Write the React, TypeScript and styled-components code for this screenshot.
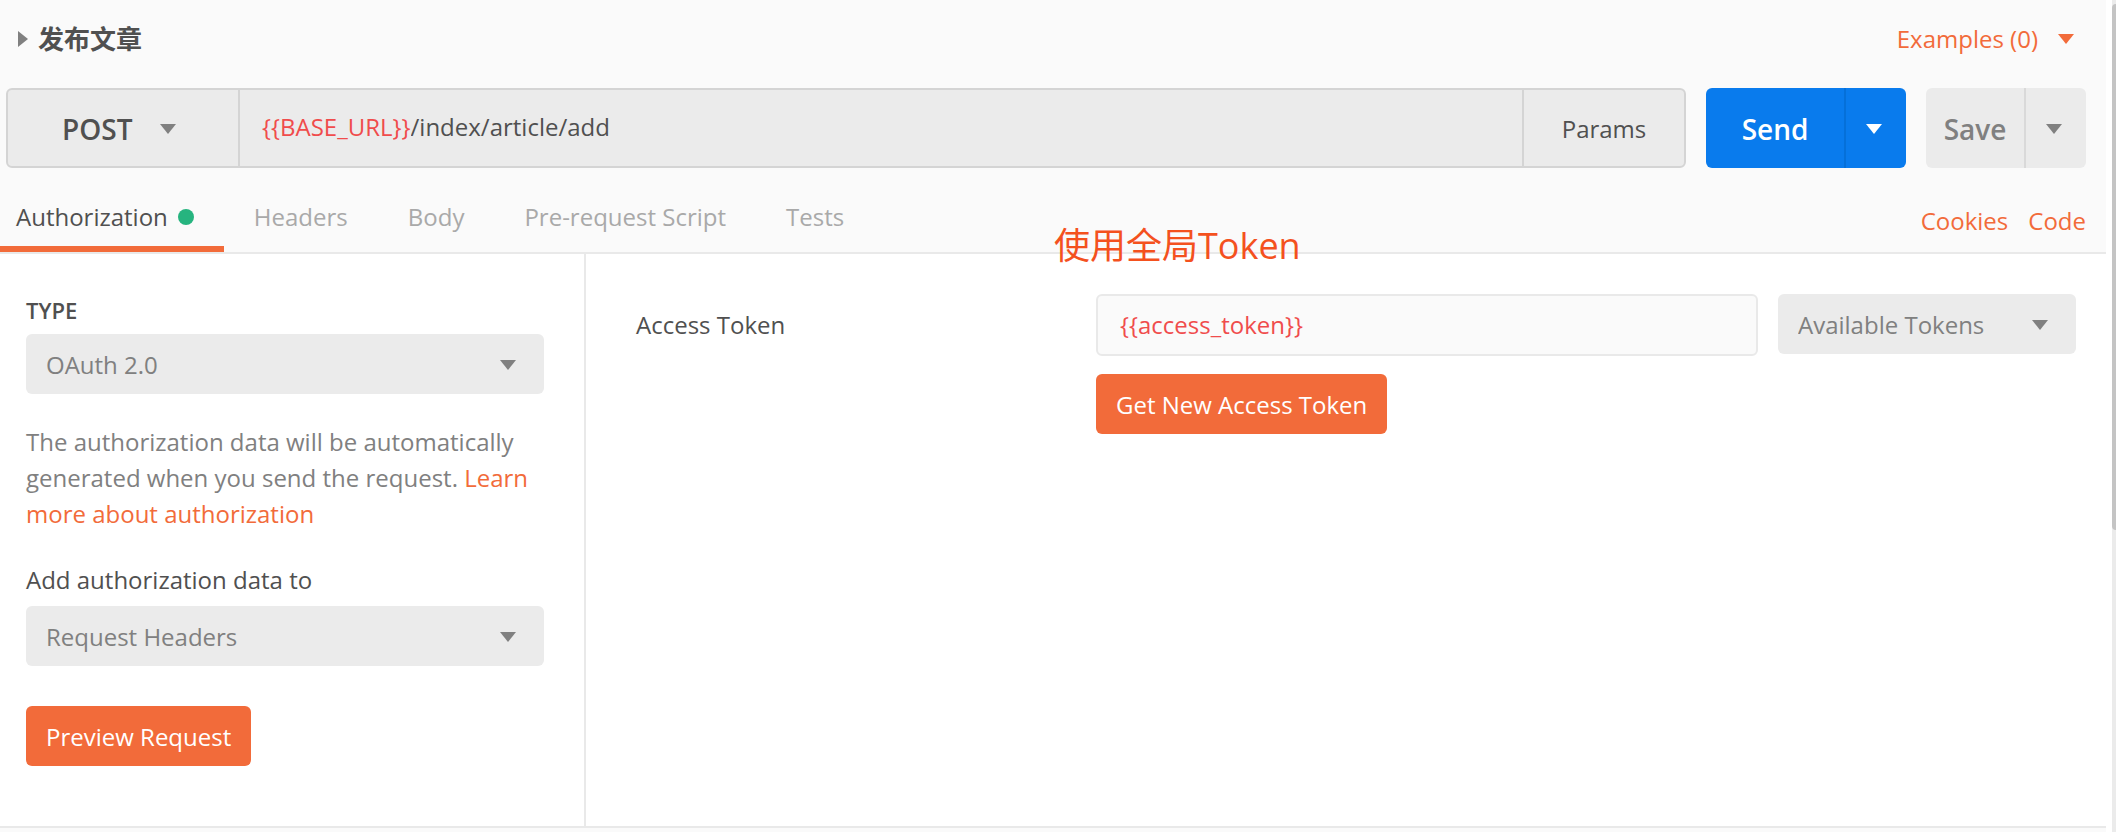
import React, { useState } from "react";
import styled, { createGlobalStyle, css } from "styled-components";

const color = {
  text: "#505050",
  muted: "#808080",
  faint: "#a9a9a9",
  orange: "#f26b3a",
  variable: "#f04c4c",
  blue: "#097bed",
  fill: "#ebebeb",
  line: "#e9e9e9",
  border: "#d4d4d4",
  page: "#fafafa",
  green: "#26b47f",
};

const GlobalStyle = createGlobalStyle`
  *, *::before, *::after { box-sizing: border-box; }
  body {
    margin: 0;
    background: #fff;
    color: ${color.text};
    font-family: "Open Sans", "Noto Sans CJK SC", sans-serif;
    font-size: 24px;
    line-height: 36px;
  }
  button, input, select { font: inherit; color: inherit; margin: 0; }
  button { cursor: pointer; }
  a { color: ${color.orange}; text-decoration: none; }
`;

const Shell = styled.div`
  display: flex;
  min-height: 100vh;
`;

const Main = styled.main`
  flex: 1;
  min-width: 0;
  display: flex;
  flex-direction: column;
  background: ${color.page};
`;

const ScrollTrack = styled.div`
  flex: none;
  width: 4px;
  margin-left: 6px;
  padding-top: 4px;
  background: ${color.fill};
`;

const ScrollThumb = styled.div`
  height: 526px;
  border-radius: 4px 0 0 4px;
  background: #c4c4c4;
`;

const TitleRow = styled.header`
  display: flex;
  align-items: center;
  justify-content: space-between;
  height: 78px;
  padding: 0 32px 0 18px;
`;

const PlainButton = styled.button<{ $accent?: boolean }>`
  display: flex;
  align-items: center;
  gap: ${(p) => (p.$accent ? 20 : 10)}px;
  padding: 0;
  border: 0;
  background: none;
  color: ${(p) => (p.$accent ? color.orange : color.muted)};
`;

const Title = styled.h1`
  margin: 0;
  color: ${color.text};
  font-size: 26px;
  font-weight: 700;
`;

const RequestRow = styled.form`
  display: flex;
  gap: 20px;
  margin-top: 10px;
  padding: 0 20px 0 6px;
`;

const UrlBar = styled.div`
  flex: 1;
  min-width: 0;
  display: flex;
  height: 80px;
  border: 2px solid ${color.border};
  border-radius: 6px;
  background: ${color.fill};
`;

const UrlField = styled.label`
  flex: 1;
  min-width: 0;
  display: flex;
  align-items: center;
  padding: 0 22px 2px;
  border: solid ${color.border};
  border-width: 0 2px;
`;

const Variable = styled.span`
  color: ${color.variable};
`;

const UrlInput = styled.input`
  flex: 1;
  min-width: 0;
  padding: 0;
  border: 0;
  outline: 0;
  background: none;
`;

const ParamsButton = styled.button`
  width: 160px;
  padding: 2px 0 0;
  border: 0;
  background: none;
`;

const SplitButton = styled.div<{ $primary?: boolean }>`
  display: flex;
  height: 80px;
  border-radius: 6px;
  overflow: hidden;
  ${(p) =>
    p.$primary
      ? css`
          background: ${color.blue};
          color: #fff;
          --split: #0570d9;
        `
      : css`
          background: ${color.fill};
          color: ${color.muted};
          --split: #d9d9d9;
        `}
`;

const SplitMain = styled.button<{ $wide?: boolean }>`
  width: ${(p) => (p.$wide ? 138 : 98)}px;
  padding: 2px 0 0;
  border: 0;
  background: none;
  font-size: 28px;
  font-weight: 600;
`;

const SplitMore = styled.button`
  display: flex;
  align-items: center;
  justify-content: center;
  width: 62px;
  padding: 2px 4px 0 0;
  border: 0;
  border-left: 2px solid var(--split);
  background: none;
`;

const TabRow = styled.div`
  display: flex;
  justify-content: space-between;
  height: 86px;
  padding-right: 20px;
  border-bottom: 2px solid ${color.line};
`;

const Tabs = styled.div`
  display: flex;
`;

const Tab = styled.button<{ $active?: boolean }>`
  display: flex;
  align-items: center;
  gap: 10px;
  padding: 20px 30px 0;
  border: 0;
  border-bottom: 6px solid ${(p) => (p.$active ? color.orange : "transparent")};
  background: none;
  color: ${(p) => (p.$active ? color.text : color.faint)};
  &:first-child { padding-left: 16px; }
`;

const Dot = styled.span`
  width: 16px;
  height: 16px;
  border-radius: 50%;
  background: ${color.green};
`;

const TabLinks = styled.nav`
  display: flex;
  align-items: center;
  gap: 20px;
  padding-top: 22px;
`;

const Panels = styled.div`
  display: flex;
  background: #fff;
  border-bottom: 2px solid ${color.line};
`;

const TypePanel = styled.section`
  flex: none;
  width: 586px;
  padding: 40px 40px 60px 26px;
  border-right: 2px solid ${color.line};
`;

const TypeLabel = styled.label`
  display: block;
  margin-bottom: 8px;
  font-size: 22px;
  font-weight: 600;
  line-height: 32px;
`;

const TargetLabel = styled.label`
  display: block;
  margin-bottom: 8px;
`;

const Help = styled.p`
  margin: 30px 0;
  color: ${color.muted};
`;

const SelectBox = styled.div`
  position: relative;
  color: ${color.muted};
`;

const SelectArrow = styled.span<{ $right: number }>`
  position: absolute;
  inset: 0 ${(p) => p.$right}px 0 auto;
  display: flex;
  align-items: center;
  padding-top: 2px;
  pointer-events: none;
`;

const Select = styled.select`
  display: block;
  width: 100%;
  height: 60px;
  padding: 2px 60px 0 20px;
  border: 0;
  border-radius: 6px;
  appearance: none;
  background: ${color.fill};
`;

const MethodBox = styled(SelectBox)`
  width: 230px;
`;

const MethodSelect = styled(Select)`
  height: 76px;
  padding: 2px 70px 0 54px;
  background: none;
  color: ${color.text};
  font-size: 28px;
  font-weight: 600;
`;

const ActionButton = styled.button`
  height: 60px;
  padding: 2px 20px 0;
  border: 0;
  border-radius: 6px;
  background: ${color.orange};
  color: #fff;
  font-weight: 500;
`;

const PreviewButton = styled(ActionButton)`
  display: block;
  margin-top: 40px;
`;

const TokenPanel = styled.section`
  position: relative;
  flex: 1;
  min-width: 0;
  display: grid;
  grid-template-columns: 440px minmax(0, 1fr) 298px;
  align-content: start;
  align-items: start;
  gap: 18px 20px;
  padding: 40px 30px 0 50px;
`;

const TokenLabel = styled.label`
  line-height: 62px;
`;

const TokenInput = styled.input`
  width: 100%;
  height: 62px;
  padding: 0 22px 2px;
  border: 2px solid ${color.line};
  border-radius: 6px;
  background: ${color.page};
  color: ${color.variable};
`;

const TokenAction = styled.div`
  grid-column: 2;
`;

const Annotation = styled.div`
  position: absolute;
  top: -34px;
  left: 468px;
  color: #f4511e;
  font-size: 36px;
  line-height: 52px;
  white-space: nowrap;
`;

function ArrowDown() {
  return (
    <svg width="16" height="10" viewBox="0 0 16 10" aria-hidden="true">
      <path d="M0 0h16L8 10z" fill="currentColor" />
    </svg>
  );
}

function ArrowRight() {
  return (
    <svg width="10" height="16" viewBox="0 0 10 16" aria-hidden="true">
      <path d="M0 0v16l10-8z" fill="currentColor" />
    </svg>
  );
}

const TABS = ["Authorization", "Headers", "Body", "Pre-request Script", "Tests"];

export default function App() {
  const [active, setActive] = useState("Authorization");
  const [path, setPath] = useState("/index/article/add");
  const [token, setToken] = useState("{{access_token}}");

  return (
    <>
      <GlobalStyle />
      <Shell>
        <Main>
          <TitleRow>
            <PlainButton type="button">
              <ArrowRight />
              <Title>发布文章</Title>
            </PlainButton>
            <PlainButton type="button" $accent>
              Examples (0)
              <ArrowDown />
            </PlainButton>
          </TitleRow>

          <RequestRow onSubmit={(e) => e.preventDefault()}>
            <UrlBar>
              <MethodBox>
                <MethodSelect aria-label="Method" defaultValue="POST">
                  <option>POST</option>
                </MethodSelect>
                <SelectArrow $right={62}>
                  <ArrowDown />
                </SelectArrow>
              </MethodBox>
              <UrlField>
                <Variable>{"{{BASE_URL}}"}</Variable>
                <UrlInput
                  aria-label="Request URL"
                  value={path}
                  onChange={(e) => setPath(e.target.value)}
                />
              </UrlField>
              <ParamsButton type="button">Params</ParamsButton>
            </UrlBar>
            <SplitButton $primary>
              <SplitMain $wide>Send</SplitMain>
              <SplitMore type="button" aria-label="Send options">
                <ArrowDown />
              </SplitMore>
            </SplitButton>
            <SplitButton>
              <SplitMain type="button">Save</SplitMain>
              <SplitMore type="button" aria-label="Save options">
                <ArrowDown />
              </SplitMore>
            </SplitButton>
          </RequestRow>

          <TabRow>
            <Tabs role="tablist">
              {TABS.map((name) => (
                <Tab
                  key={name}
                  type="button"
                  role="tab"
                  aria-selected={name === active}
                  $active={name === active}
                  onClick={() => setActive(name)}
                >
                  {name}
                  {name === "Authorization" && <Dot />}
                </Tab>
              ))}
            </Tabs>
            <TabLinks>
              <a href="#cookies">Cookies</a>
              <a href="#code">Code</a>
            </TabLinks>
          </TabRow>

          <Panels>
            <TypePanel>
              <TypeLabel htmlFor="auth-type">TYPE</TypeLabel>
              <SelectBox>
                <Select id="auth-type" defaultValue="OAuth 2.0">
                  <option>OAuth 2.0</option>
                </Select>
                <SelectArrow $right={28}>
                  <ArrowDown />
                </SelectArrow>
              </SelectBox>
              <Help>
                The authorization data will be automatically generated when you send the request.{" "}
                <a href="#learn">Learn more about authorization</a>
              </Help>
              <TargetLabel htmlFor="auth-target">Add authorization data to</TargetLabel>
              <SelectBox>
                <Select id="auth-target" defaultValue="Request Headers">
                  <option>Request Headers</option>
                </Select>
                <SelectArrow $right={28}>
                  <ArrowDown />
                </SelectArrow>
              </SelectBox>
              <PreviewButton type="button">Preview Request</PreviewButton>
            </TypePanel>

            <TokenPanel>
              <TokenLabel htmlFor="access-token">Access Token</TokenLabel>
              <TokenInput
                id="access-token"
                value={token}
                onChange={(e) => setToken(e.target.value)}
              />
              <SelectBox>
                <Select aria-label="Available Tokens" defaultValue="Available Tokens">
                  <option>Available Tokens</option>
                </Select>
                <SelectArrow $right={28}>
                  <ArrowDown />
                </SelectArrow>
              </SelectBox>
              <TokenAction>
                <ActionButton type="button">Get New Access Token</ActionButton>
              </TokenAction>
              <Annotation>使用全局Token</Annotation>
            </TokenPanel>
          </Panels>
        </Main>
        <ScrollTrack aria-hidden="true">
          <ScrollThumb />
        </ScrollTrack>
      </Shell>
    </>
  );
}
